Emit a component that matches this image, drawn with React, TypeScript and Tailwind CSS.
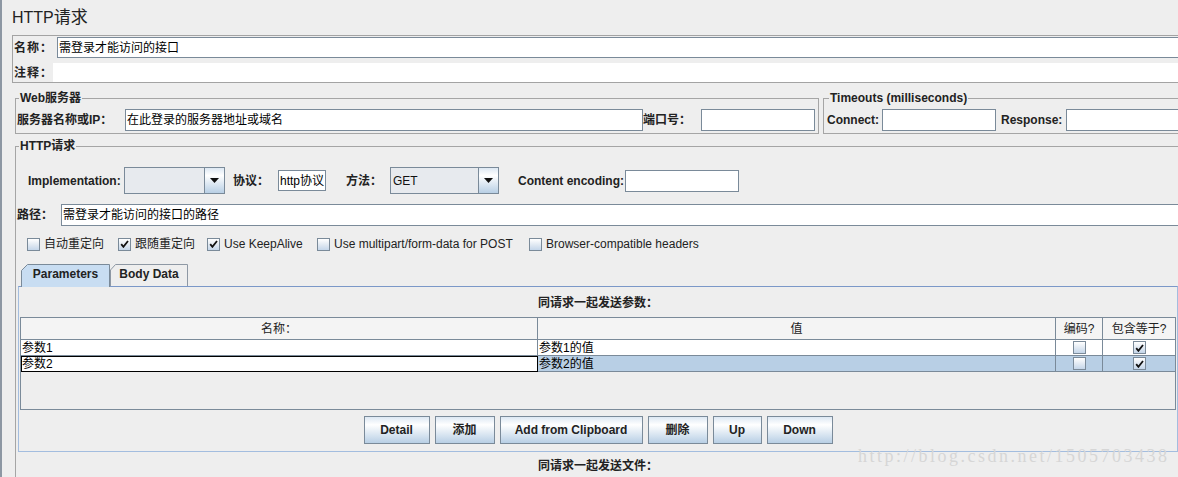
import React from "react";

const grad = "bg-[linear-gradient(to_bottom,#dde8f3,#ffffff_30%,#b8cfe5)]";

function Check({ on }: { on?: boolean }) {
  return (
    <span className="flex h-[13px] w-[13px] shrink-0 items-center justify-center border border-[#7a8a99] bg-[linear-gradient(to_bottom,#ffffff,#dfe8f2_55%,#c4d6ea)]">
      {on && (
        <svg width="9" height="8" viewBox="0 0 9 8">
          <path d="M1.2 4.2 L3.4 6.8 L8 1" fill="none" stroke="#111" strokeWidth="1.8" />
        </svg>
      )}
    </span>
  );
}

function Combo({ className, value }: { className: string; value?: string }) {
  return (
    <div className={`flex h-[27px] shrink-0 border border-[#7a8a99] bg-[#e7eaee] ${className}`}>
      <div className="flex flex-1 items-center pl-[2px] text-[#111]">{value}</div>
      <div className={`flex w-[20px] shrink-0 items-center justify-center border-l border-[#7a8a99] ${grad}`}>
        <svg width="9" height="5" viewBox="0 0 9 5">
          <path d="M0 0H9L4.5 5Z" fill="#111" />
        </svg>
      </div>
    </div>
  );
}

function Btn({ className, children }: { className: string; children: React.ReactNode }) {
  return (
    <div
      className={`flex h-[28px] items-center justify-center border border-[#7a8a99] font-bold text-[#222] ${grad} ${className}`}
    >
      {children}
    </div>
  );
}

function Opt({ on, label, className }: { on?: boolean; label: string; className: string }) {
  return (
    <div className={`flex shrink-0 items-center gap-[4px] ${className}`}>
      <Check on={on} />
      <span>{label}</span>
    </div>
  );
}

export default function App() {
  return (
    <div className="relative flex h-[477px] w-[1178px] overflow-hidden bg-[#eeeeee] font-['Liberation_Sans','Noto_Sans_CJK_SC',sans-serif] text-[12px] leading-[14px] text-[#222]">
      <div className="w-[2px] shrink-0 bg-[#8d97a3]" />
      <div className="min-w-0 flex-1">
        {/* title */}
        <div className="h-[35px] pl-[10px] pt-[9px] text-[16px] leading-[18px] text-[#222]">
          HTTP<span className="text-[17px]">请求</span>
        </div>

        {/* name / comment */}
        <div className="ml-[10px] w-[1180px] border-y border-l border-[#a3a3a3]">
          <div className="mt-[1px] flex items-center">
            <span className="w-[44px] shrink-0 pl-[1px] font-bold tracking-[1px]">名称：</span>
            <div className="flex h-[21px] flex-1 items-center border-y border-l border-[#7a8a99] bg-white pl-[1px] text-black">
              需登录才能访问的接口
            </div>
          </div>
          <div className="mt-[5px] flex items-center">
            <span className="w-[40px] shrink-0 pl-[1px] font-bold tracking-[1px]">注释：</span>
            <div className="h-[19px] flex-1 bg-white" />
          </div>
        </div>

        {/* servers */}
        <div className="ml-[13px] mt-[8px] flex items-start">
          <fieldset className="w-[804px] shrink-0 border border-[#a5a5a5] pb-[2px]">
            <legend className="ml-[3px] px-[1px] font-bold">Web服务器</legend>
            <div className="flex items-center pl-[1px] pt-[4px]">
              <span className="w-[108px] shrink-0 font-bold">服务器名称或IP：</span>
              <div className="flex h-[22px] w-[518px] shrink-0 items-center border border-[#7a8a99] bg-white pl-[1px] text-black">
                在此登录的服务器地址或域名
              </div>
              <span className="w-[58px] shrink-0 font-bold">端口号：</span>
              <div className="h-[22px] w-[114px] shrink-0 border border-[#7a8a99] bg-white" />
            </div>
          </fieldset>
          <fieldset className="ml-[4px] w-[400px] shrink-0 border border-[#a5a5a5] pb-[2px]">
            <legend className="ml-[5px] px-[1px] font-bold">Timeouts (milliseconds)</legend>
            <div className="flex items-center pl-[3px] pt-[4px]">
              <span className="w-[55px] shrink-0 font-bold">Connect:</span>
              <div className="h-[22px] w-[114px] shrink-0 border border-[#7a8a99] bg-white" />
              <span className="ml-[5px] w-[65px] shrink-0 font-bold">Response:</span>
              <div className="h-[22px] w-[200px] shrink-0 border border-[#7a8a99] bg-white" />
            </div>
          </fieldset>
        </div>

        {/* http request */}
        <fieldset className="ml-[13px] mt-[5px] w-[1175px] border border-[#a5a5a5]">
          <legend className="ml-[3px] px-[1px] font-bold">HTTP请求</legend>

          <div className="mt-[14px] flex h-[27px] items-center pl-[12px]">
            <span className="w-[96px] shrink-0 font-bold">Implementation:</span>
            <Combo className="w-[101px]" />
            <span className="ml-[8px] w-[45px] shrink-0 font-bold">协议：</span>
            <div className="flex h-[21px] w-[48px] shrink-0 items-center border border-[#7a8a99] bg-white pl-[1px] text-black">
              http协议
            </div>
            <span className="ml-[20px] w-[44px] shrink-0 font-bold">方法：</span>
            <Combo className="w-[109px]" value="GET" />
            <span className="ml-[19px] w-[107px] shrink-0 font-bold">Content encoding:</span>
            <div className="h-[22px] w-[114px] shrink-0 border border-[#7a8a99] bg-white" />
          </div>

          <div className="mt-[10px] flex items-center pl-[1px]">
            <span className="w-[44px] shrink-0 font-bold">路径：</span>
            <div className="flex h-[22px] flex-1 items-center border-y border-l border-[#7a8a99] bg-white pl-[1px] text-black">
              需登录才能访问的接口的路径
            </div>
          </div>

          <div className="mt-[10px] flex h-[16px] items-center pl-[11px] text-[#222]">
            <Opt className="w-[91px]" label="自动重定向" />
            <Opt className="w-[89px]" on label="跟随重定向" />
            <Opt className="w-[110px]" on label="Use KeepAlive" />
            <Opt className="w-[212px]" label="Use multipart/form-data for POST" />
            <Opt className="w-[200px]" label="Browser-compatible headers" />
          </div>

          {/* tabs */}
          <div className="relative z-10 mt-[12px] flex h-[22px] items-start pl-[5px]">
            <div className="relative flex h-[23px] w-[89px] items-center justify-center font-bold">
              <svg className="absolute inset-0" width="89" height="23" viewBox="0 0 89 23">
                <path d="M0.5 23 V6.5 L6.5 0.5 H88.5 V23" fill="#c8ddf2" stroke="#7a8a99" />
              </svg>
              <span className="relative -mt-[3px]">Parameters</span>
            </div>
            <div className="relative flex h-[22px] w-[78px] items-center justify-center font-bold">
              <svg className="absolute inset-0" width="78" height="22" viewBox="0 0 78 22">
                <path d="M0.5 22 V6 L5.5 0.5 H77.5 V22" fill="#eeeeee" stroke="#8e98a4" />
              </svg>
              <span className="relative -mt-[2px]">Body Data</span>
            </div>
          </div>

          <div className="ml-[2px] w-[1160px] border border-[#a3bddf] border-t-[#7b98c8]">
            <div className="mt-[9px] text-center font-bold">同请求一起发送参数：</div>
            <div className="mx-[1px] mt-[7px] border border-[#7a8a99]">
              <div className="grid grid-cols-[517px_518px_47px_72px] text-[#222]">
                <div className="flex h-[22px] items-center justify-center border-b border-r border-[#7a8a99] bg-[#f4f4f4]">名称：</div>
                <div className="flex h-[22px] items-center justify-center border-b border-r border-[#7a8a99] bg-[#f4f4f4]">值</div>
                <div className="flex h-[22px] items-center justify-center border-b border-r border-[#7a8a99] bg-[#f4f4f4]">编码?</div>
                <div className="flex h-[22px] items-center justify-center border-b border-[#7a8a99] bg-[#f4f4f4]">包含等于?</div>

                <div className="flex h-[16px] items-center border-b border-r border-[#7a8a99] bg-white pl-[1px] text-black">参数1</div>
                <div className="flex h-[16px] items-center border-b border-r border-[#7a8a99] bg-white pl-[1px] text-black">参数1的值</div>
                <div className="flex h-[16px] items-center justify-center border-b border-r border-[#7a8a99] bg-white">
                  <Check />
                </div>
                <div className="flex h-[16px] items-center justify-center border-b border-[#7a8a99] bg-white">
                  <Check on />
                </div>

                <div className="flex h-[16px] items-center border-b border-r border-black bg-white pl-[1px] text-black shadow-[inset_1px_1px_0_0_#000]">参数2</div>
                <div className="flex h-[16px] items-center border-b border-r border-[#7a8a99] bg-[#b8cfe5] pl-[1px] text-black">参数2的值</div>
                <div className="flex h-[16px] items-center justify-center border-b border-r border-[#7a8a99] bg-[#b8cfe5]">
                  <Check />
                </div>
                <div className="flex h-[16px] items-center justify-center border-b border-[#7a8a99] bg-[#b8cfe5]">
                  <Check on />
                </div>
              </div>
              <div className="h-[37px]" />
            </div>
            <div className="mb-[7px] mt-[6px] flex justify-center gap-[5px]">
              <Btn className="w-[66px]">Detail</Btn>
              <Btn className="w-[60px]">添加</Btn>
              <Btn className="w-[143px]">Add from Clipboard</Btn>
              <Btn className="w-[60px]">删除</Btn>
              <Btn className="w-[49px]">Up</Btn>
              <Btn className="w-[66px]">Down</Btn>
            </div>
          </div>
          <div className="ml-[2px] mt-[7px] w-[1160px] text-center font-bold">同请求一起发送文件：</div>
          <div className="h-[40px]" />
        </fieldset>
      </div>

      <div className="pointer-events-none absolute left-[858px] top-[446px] font-['Liberation_Serif',serif] text-[18px] leading-[20px] tracking-[2.5px] text-[#d6d6d6]">
        http://blog.csdn.net/1505703438
      </div>
    </div>
  );
}
